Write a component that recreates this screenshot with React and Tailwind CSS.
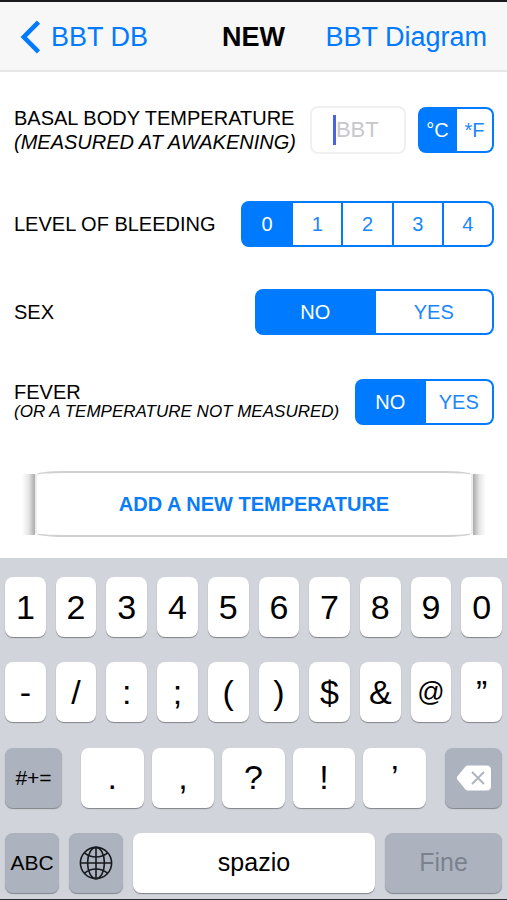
import { useState } from 'react';
import clsx from 'clsx';

const DIGITS = ['1', '2', '3', '4', '5', '6', '7', '8', '9', '0'];
const SYMBOLS = ['-', '/', ':', ';', '(', ')', '$', '&', '@', '”'];
const PUNCTUATION = ['.', ',', '?', '!', '’'];

const SegmentedControl = ({ name, label, options, defaultValue, className }) => {
  const [value, setValue] = useState(defaultValue);

  return (
    <fieldset
      aria-label={label}
      className={clsx('flex h-[46px] shrink-0 gap-[2px] rounded-lg bg-[#007aff] p-[2px]', className)}
    >
      {options.map((option) => (
        <label
          key={option}
          className={clsx(
            'flex flex-1 cursor-pointer items-center justify-center text-xl first:rounded-l-md last:rounded-r-md',
            value === option ? 'text-white' : 'bg-white text-[#1a86fb]'
          )}
        >
          <input
            type="radio"
            name={name}
            value={option}
            checked={value === option}
            onChange={() => setValue(option)}
            className="sr-only"
          />
          {option}
        </label>
      ))}
    </fieldset>
  );
};

const Key = ({ children, dark = false, className, ...props }) => (
  <button
    type="button"
    className={clsx(
      'flex h-[60px] min-w-0 items-center justify-center rounded-lg shadow-[0_1px_1px_#808388]',
      dark ? 'bg-[#acb3bf]' : 'bg-white',
      className
    )}
    {...props}
  >
    {children}
  </button>
);

const ChevronIcon = () => (
  <svg viewBox="0 0 21 34" className="h-[34px] w-[21px]" fill="none" stroke="#007aff" strokeWidth="4.6" aria-hidden="true">
    <path d="M18.500 2.200 3.800 17 18.500 31.800" />
  </svg>
);

const GlobeIcon = () => (
  <svg viewBox="0 0 34 34" className="size-[34px]" fill="none" stroke="#15181d" strokeWidth="1.6" aria-hidden="true">
    <circle cx="17" cy="17" r="15.6" />
    <ellipse cx="17" cy="17" rx="8.4" ry="15.6" />
    <path d="M17 1.4v31.2M1.4 17h31.2" />
    <path d="M5.5 6.8C9 9.7 13 11 17 11s8-1.3 11.5-4.2M5.5 27.2C9 24.3 13 23 17 23s8 1.3 11.5 4.2" />
  </svg>
);

const DeleteIcon = () => (
  <svg viewBox="0 0 36 26" className="h-[26px] w-9" aria-hidden="true">
    <path d="M12 0.5H30.5Q35 0.5 35 5V21Q35 25.5 30.5 25.5H12Q10.5 25.5 9.5 24.5L1.3 14.6Q0.3 13 1.3 11.4L9.5 1.5Q10.5 0.5 12 0.5Z" fill="#fff" />
    <path d="M16 7 28 19M28 7 16 19" stroke="#acb3bf" strokeWidth="1.8" fill="none" />
  </svg>
);

const Keyboard = () => (
  <section
    aria-label="Keyboard"
    className="flex flex-1 flex-col justify-between gap-5 border-b border-[#2b2b30] bg-[#d1d5db] px-[5px] pt-[19px] pb-[6px] text-black"
  >
    {[DIGITS, SYMBOLS].map((row) => (
      <div key={row[0]} className="flex gap-[10px]">
        {row.map((char) => (
          <Key key={char} className={clsx('flex-1', char === '@' ? 'text-[27px]' : 'text-[34px]')}>
            {char}
          </Key>
        ))}
      </div>
    ))}

    <div className="flex gap-[19px]">
      <Key dark className="w-[57px] text-[21px]">#+=</Key>
      <div className="flex flex-1 gap-2">
        {PUNCTUATION.map((char) => (
          <Key key={char} className="flex-1 text-[34px]">{char}</Key>
        ))}
      </div>
      <Key dark className="w-[57px]" aria-label="Delete">
        <DeleteIcon />
      </Key>
    </div>

    <div className="flex gap-[10px]">
      <Key dark className="w-[54px] text-[21px]">ABC</Key>
      <Key dark className="w-[54px]" aria-label="Next keyboard">
        <GlobeIcon />
      </Key>
      <Key className="flex-1 text-[25px]">spazio</Key>
      <Key dark className="w-[117px] text-[25px] text-[#7b828d]">Fine</Key>
    </div>
  </section>
);

const App = () => {
  return (
    <div className="flex min-h-screen flex-col bg-white font-['Liberation_Sans',Arial,sans-serif]">
      {/* Navigation bar */}
      <header className="grid h-[72px] grid-cols-[1fr_auto_1fr] items-center border-t-2 border-b-2 border-t-[#19191b] border-b-[#e6e6e6] bg-[#f7f7f7] px-5 pt-[2px] text-[27px] text-[#007aff]">
        <a href="#db" className="flex items-center gap-[10px] whitespace-nowrap">
          <ChevronIcon />
          BBT DB
        </a>
        <h1 className="font-bold text-black">NEW</h1>
        <a href="#diagram" className="text-right whitespace-nowrap">BBT Diagram</a>
      </header>

      <main className="flex flex-col pt-[35px] pr-[13px] pb-[21px] pl-[14px] text-xl text-black">
        {/* Temperature */}
        <div className="flex h-[46px] items-center justify-between">
          <label htmlFor="bbt" className="leading-6 whitespace-nowrap">
            BASAL BODY TEMPERATURE
            <br />
            <em>(MEASURED AT AWAKENING)</em>
          </label>
          <div className="flex items-center gap-3">
            <div className="flex h-12 w-24 items-center rounded-lg border-2 border-[#f0f0f0] pl-[21px]">
              <span className="h-[30px] w-[3px] bg-[#4a63e6]" />
              <input
                id="bbt"
                type="text"
                placeholder="BBT"
                className="w-full min-w-0 text-[22px] outline-none placeholder:text-[#c7c7cc]"
              />
            </div>
            <SegmentedControl name="unit" label="Unit" options={['°C', '*F']} defaultValue="°C" className="w-[76px]" />
          </div>
        </div>

        {/* Bleeding */}
        <div className="mt-12 flex items-center justify-between">
          <span>LEVEL OF BLEEDING</span>
          <SegmentedControl
            name="bleeding"
            label="Level of bleeding"
            options={['0', '1', '2', '3', '4']}
            defaultValue="0"
            className="w-[253px]"
          />
        </div>

        {/* Sex */}
        <div className="mt-[42px] flex items-center justify-between">
          <span>SEX</span>
          <SegmentedControl name="sex" label="Sex" options={['NO', 'YES']} defaultValue="NO" className="w-[239px]" />
        </div>

        {/* Fever */}
        <div className="mt-11 flex items-center justify-between">
          <div className="leading-5 whitespace-nowrap">
            <div>FEVER</div>
            <em className="block text-[17px] leading-5">(OR A TEMPERATURE NOT MEASURED)</em>
          </div>
          <SegmentedControl name="fever" label="Fever" options={['NO', 'YES']} defaultValue="NO" className="w-[139px]" />
        </div>

        <div className="mt-[46px] flex items-center px-2">
          <span className="h-[61px] w-[13px] bg-linear-to-r from-white via-[#e6e6e6] to-[#ababab]" />
          <button
            type="button"
            className="h-[66px] flex-1 rounded-[30px/4px] border-2 border-x-[#ececec] border-y-[#d0d0d0] bg-white font-bold text-[#0a7cf8]"
          >
            ADD A NEW TEMPERATURE
          </button>
          <span className="h-[61px] w-[13px] bg-linear-to-l from-white via-[#e6e6e6] to-[#ababab]" />
        </div>
      </main>

      <Keyboard />
    </div>
  );
};

export default App;
